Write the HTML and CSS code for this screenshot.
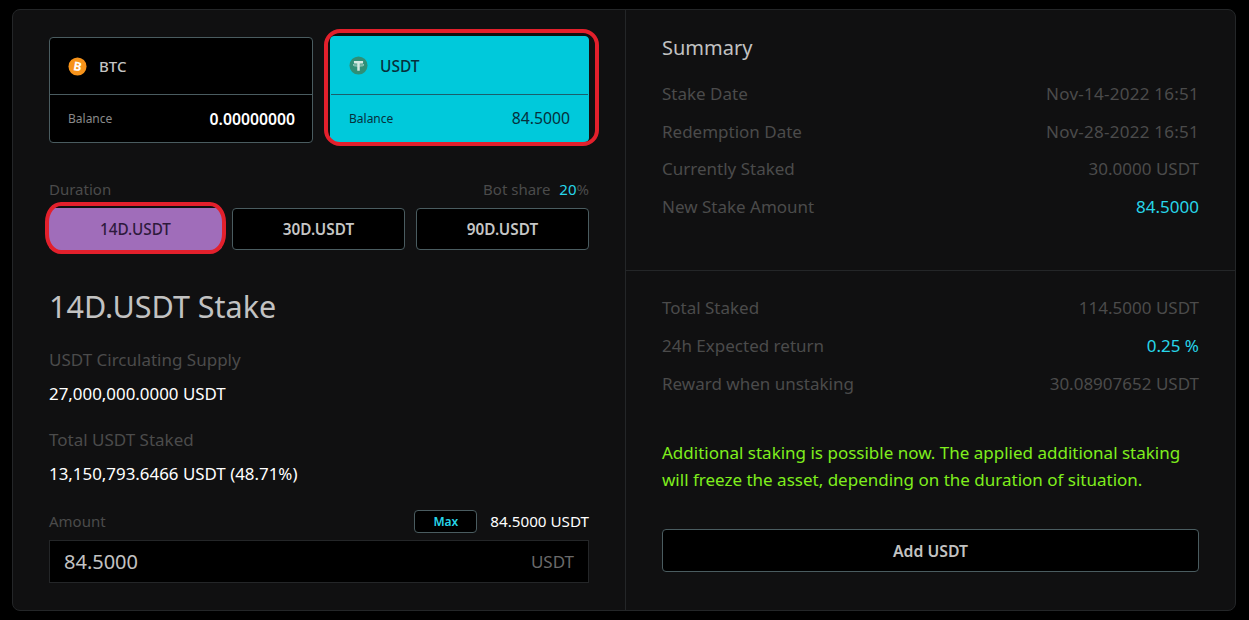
FILE: index.html
```html
<!doctype html>
<html>
<head>
  <link rel="stylesheet" href="styles.css">
</head>
<body>
  <div class="panel">
    <div class="left">
      <div class="coins">
        <div class="coin">
          <div class="coinHead">
            <svg class="coinIcon" viewBox="0 0 20 20">
              <circle cx="10" cy="10" r="9.5" fill="#f7931a"/>
              <text x="10" y="14.6" text-anchor="middle" class="btcGlyph" transform="rotate(10 10 10)">B</text>
            </svg>
            <span>BTC</span>
          </div>
          <div class="coinBal">
            <span class="balLabel">Balance</span>
            <span class="balValue strong">0.00000000</span>
          </div>
        </div>
        <div class="coin selected">
          <div class="coinHead">
            <svg class="coinIcon" viewBox="0 0 20 20">
              <circle cx="10" cy="10" r="9.5" fill="#2f8f76"/>
              <path d="M5.2 5.2h9.6v2.4h-3.5v8h-2.6v-8H5.2z" fill="#d5e8e1"/>
              <ellipse cx="10" cy="9.4" rx="5.6" ry="1.2" fill="none" stroke="#d5e8e1" stroke-width=".8"/>
            </svg>
            <span>USDT</span>
          </div>
          <div class="coinBal">
            <span class="balLabel">Balance</span>
            <span class="balValue">84.5000</span>
          </div>
          <div class="ring ringCoin"></div>
        </div>
      </div>

      <div class="durationHead">
        <span class="muted">Duration</span>
        <span class="muted">Bot share <span class="share"><span class="cyan">20</span>%</span></span>
      </div>
      <div class="durations">
        <button class="dur picked">14D.USDT<span class="ring ringDur"></span></button>
        <button class="dur">30D.USDT</button>
        <button class="dur">90D.USDT</button>
      </div>

      <h1 class="title">14D.USDT Stake</h1>

      <div class="muted stat">USDT Circulating Supply</div>
      <div class="statValue">27,000,000.0000 USDT</div>
      <div class="muted stat second">Total USDT Staked</div>
      <div class="statValue">13,150,793.6466 USDT (48.71%)</div>

      <div class="amountHead">
        <span class="muted">Amount</span>
        <span class="amountRight">
          <button class="maxBtn">Max</button>
          <span class="statValue small">84.5000 USDT</span>
        </span>
      </div>
      <div class="amountBox">
        <span class="amountVal">84.5000</span>
        <span class="amountUnit">USDT</span>
      </div>
    </div>

    <div class="right">
      <div class="summary">
        <h2 class="sumTitle">Summary</h2>
        <div class="row"><span>Stake Date</span><span class="date">Nov-14-2022 16:51</span></div>
        <div class="row"><span>Redemption Date</span><span class="date">Nov-28-2022 16:51</span></div>
        <div class="row"><span>Currently Staked</span><span>30.0000 USDT</span></div>
        <div class="row"><span>New Stake Amount</span><span class="cyan">84.5000</span></div>
      </div>
      <div class="totals">
        <div class="row"><span>Total Staked</span><span>114.5000 USDT</span></div>
        <div class="row"><span>24h Expected return</span><span class="cyan">0.25 %</span></div>
        <div class="row"><span>Reward when unstaking</span><span>30.08907652 USDT</span></div>
        <p class="notice">Additional staking is possible now. The applied additional staking will freeze the asset, depending on the duration of situation.</p>
        <button class="addBtn">Add USDT</button>
      </div>
    </div>
  </div>
</body>
</html>
```
FILE: styles.css
```css
html, body {
  height: 100%;
}
body {
  margin: 0;
  background-color: #000000;
  color: #ffffff;
  font-family: "Noto Sans", "Open Sans", sans-serif;
  font-size: 16px;
  overflow: hidden;
}
button {
  font-family: inherit;
  cursor: pointer;
}
.panel {
  box-sizing: border-box;
  width: 1224px;
  height: 602px;
  margin: 9px 0 0 12px;
  display: flex;
  background-color: #101011;
  border: 1px solid #242628;
  border-radius: 8px;
}
.left {
  box-sizing: border-box;
  width: 613px;
  padding: 27px 36px 0 36px;
  border-right: 1px solid #242628;
}
.right {
  flex: 1;
}

.coins {
  display: flex;
  gap: 17px;
}
.coin {
  box-sizing: border-box;
  position: relative;
  height: 106px;
  width: 264px;
  background-color: #000000;
  border: 1px solid #4a5c60;
  border-radius: 4px;
  color: #c4c4c4;
}
.coin.selected {
  width: 259px;
  margin-top: -1px;
  background-color: #00c9db;
  border-color: #00c9db;
  color: #06303c;
}
.coinHead {
  box-sizing: border-box;
  height: 57px;
  display: flex;
  align-items: center;
  gap: 12px;
  padding-left: 18px;
  font-size: 15px;
  font-weight: 500;
  border-bottom: 1px solid #4a5c60;
}
.coin.selected .coinHead {
  height: 58px;
  font-size: 15.5px;
  border-bottom-color: #1a5f6c;
}
.coinIcon {
  width: 19px;
  height: 19px;
}
.btcGlyph {
  font-family: "Noto Sans", sans-serif;
  font-size: 13px;
  font-weight: 700;
  fill: #ffffff;
}
.coinBal {
  display: flex;
  justify-content: space-between;
  align-items: center;
  height: 47px;
  padding: 0 17px 0 18px;
}
.coin.selected .coinBal {
  height: 46px;
  padding-right: 18px;
}
.balLabel {
  font-size: 12px;
  color: #8a8a8a;
}
.coin.selected .balLabel {
  color: #06303c;
}
.balValue {
  font-size: 15.75px;
}
.balValue.strong {
  font-weight: 600;
  color: #ffffff;
}

.ring {
  position: absolute;
  box-sizing: border-box;
  border: 4px solid #e3202c;
  pointer-events: none;
}
.ringCoin {
  top: -8px;
  left: -7px;
  width: 275px;
  height: 117px;
  border-radius: 16px;
}
.ringDur {
  top: -7px;
  left: -5px;
  width: 181px;
  height: 52px;
  border-radius: 16px / 20px;
}

.muted {
  color: #4b4b4b;
  font-size: 15px;
}
.cyan {
  color: #27d6ea;
}
.share {
  margin-left: 5px;
}
.durationHead {
  display: flex;
  justify-content: space-between;
  align-items: center;
  margin-top: 36px;
  height: 20px;
}
.durations {
  display: flex;
  gap: 10px;
  margin-top: 9px;
}
.dur {
  position: relative;
  width: 173px;
  height: 42px;
  padding: 0;
  background-color: #000000;
  border: 1px solid #4a5c60;
  border-radius: 4px;
  color: #c6c6c6;
  font-size: 15.3px;
  font-weight: 600;
}
.dur:last-child {
  margin-left: 1px;
}
.dur.picked {
  background-color: #a06dba;
  border-color: #a06dba;
  color: #2e1a3c;
  font-weight: 500;
}

.title {
  margin: 35px 0 0 0;
  font-size: 30.5px;
  line-height: 42px;
  font-weight: 400;
  color: #c2c2c2;
}
.stat {
  font-size: 17px;
  line-height: 24px;
  margin-top: 21px;
}
.stat.second {
  margin-top: 22px;
}
.statValue {
  font-size: 16.9px;
  line-height: 24px;
  margin-top: 10px;
  color: #ffffff;
}
.statValue.small {
  font-size: 15.2px;
  margin-top: 0;
}
.amountHead {
  display: flex;
  justify-content: space-between;
  align-items: center;
  margin-top: 23px;
  height: 24px;
}
.amountHead .muted {
  font-size: 15px;
}
.amountRight {
  display: flex;
  align-items: center;
  gap: 13px;
}
.maxBtn {
  box-sizing: border-box;
  width: 63px;
  height: 23px;
  padding: 0;
  background-color: #000000;
  border: 1px solid #4a5c60;
  border-radius: 4px;
  color: #27d6ea;
  font-size: 12px;
  font-weight: 600;
}
.amountBox {
  box-sizing: border-box;
  display: flex;
  justify-content: space-between;
  align-items: center;
  height: 43px;
  margin-top: 7px;
  padding: 0 14px;
  background-color: #000000;
  border: 1px solid #242628;
}
.amountVal {
  font-size: 20px;
  color: #c2c2c2;
}
.amountUnit {
  font-size: 17px;
  color: #6a6a6a;
}

.summary {
  box-sizing: border-box;
  height: 261px;
  padding: 24px 36px 0 36px;
  border-bottom: 1px solid #242628;
}
.sumTitle {
  margin: 0 0 13px 0;
  font-size: 20px;
  line-height: 28px;
  font-weight: 400;
  color: #c2c2c2;
}
.row {
  display: flex;
  justify-content: space-between;
  align-items: center;
  height: 38px;
  font-size: 17px;
  color: #4b4b4b;
}
.summary .row {
  height: 37.6px;
}
.date {
  letter-spacing: .25px;
}
.totals {
  padding: 17px 36px 0 36px;
}
.notice {
  margin: 37px 0 0 0;
  font-size: 17px;
  line-height: 27px;
  color: #7fee1d;
}
.addBtn {
  display: block;
  width: 100%;
  height: 43px;
  margin-top: 36px;
  padding: 0;
  background-color: #000000;
  border: 1px solid #4a5c60;
  border-radius: 4px;
  color: #c2c2c2;
  font-size: 15.8px;
  font-weight: 600;
}
```
